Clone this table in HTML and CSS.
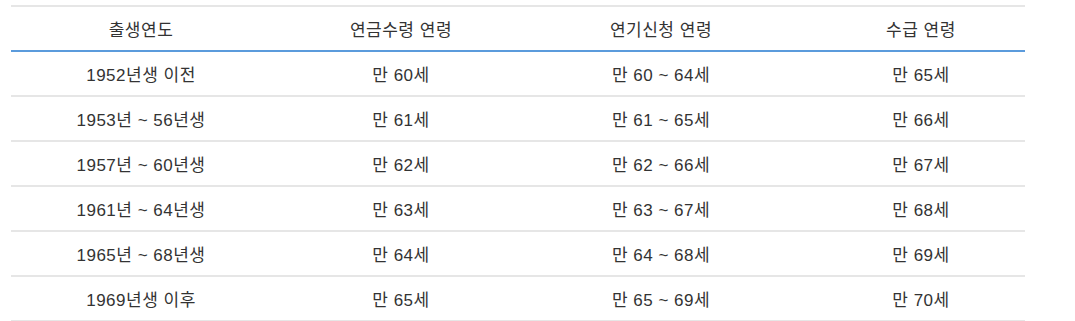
FILE: index.html
```html
<!DOCTYPE html>
<html lang="ko">
<head>
<meta charset="utf-8">
<link rel="stylesheet" href="styles.css">
</head>
<body>
<div class="wrap">
<table class="pension">
<thead>
<tr><th>출생연도</th><th>연금수령 연령</th><th>연기신청 연령</th><th>수급 연령</th></tr>
</thead>
<tbody>
<tr><td>1952년생 이전</td><td>만 60세</td><td>만 60 ~ 64세</td><td>만 65세</td></tr>
<tr><td>1953년 ~ 56년생</td><td>만 61세</td><td>만 61 ~ 65세</td><td>만 66세</td></tr>
<tr><td>1957년 ~ 60년생</td><td>만 62세</td><td>만 62 ~ 66세</td><td>만 67세</td></tr>
<tr><td>1961년 ~ 64년생</td><td>만 63세</td><td>만 63 ~ 67세</td><td>만 68세</td></tr>
<tr><td>1965년 ~ 68년생</td><td>만 64세</td><td>만 64 ~ 68세</td><td>만 69세</td></tr>
<tr><td>1969년생 이후</td><td>만 65세</td><td>만 65 ~ 69세</td><td>만 70세</td></tr>
</tbody>
</table>
</div>
</body>
</html>
```
FILE: styles.css
```css
html, body {
  margin: 0;
  padding: 0;
  background: #fff;
}
.wrap {
  margin: 5px 0 0 11px;
  width: 1014px;
  overflow: hidden;
}
.pension {
  width: 1040px;
  border-collapse: collapse;
  table-layout: fixed;
  font-family: "Liberation Sans", "Noto Sans CJK KR", sans-serif;
  font-size: 17px;
  letter-spacing: 0.5px;
  color: #333;
}
.pension th,
.pension td {
  height: 43px;
  padding: 0;
  text-align: center;
  vertical-align: middle;
  font-weight: normal;
  border-bottom: 2px solid #e6e6e6;
}
.pension thead tr {
  border-top: 2px solid #e6e6e6;
}
.pension th {
  border-bottom: 2px solid #5b9bdc;
}
```
